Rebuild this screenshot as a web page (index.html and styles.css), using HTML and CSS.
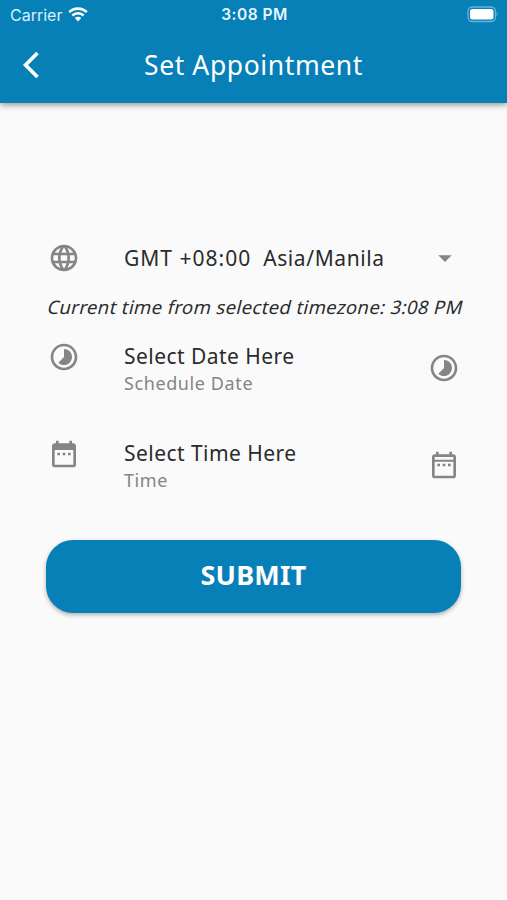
FILE: index.html
```html
<!DOCTYPE html>
<html lang="en">
<head>
<meta charset="utf-8">
<title>Set Appointment</title>
<link rel="stylesheet" href="styles.css">
</head>
<body>
<header class="appbar">
  <div class="status">
    <div class="carrier"><span>Carrier</span>
      <svg class="wifi" viewBox="0 0 20 15"><path d="M1.2 5.2a12.5 12.5 0 0 1 17.6 0M4.4 8.5a8 8 0 0 1 11.2 0" fill="none" stroke="currentColor" stroke-width="2.6"/><path d="M6.8 11.1a4.6 4.6 0 0 1 6.4 0L10 14.4z" fill="currentColor"/></svg>
    </div>
    <span class="clock">3:08 PM</span>
    <svg class="battery" viewBox="0 0 32 17"><rect x="1" y="1" width="27.5" height="14.5" rx="4.5" fill="none" stroke="#6bb4d9" stroke-width="1.3"/><rect x="3" y="3" width="23.5" height="10.5" rx="2.5" fill="#fff"/><path d="M29.7 5.8q2 2.4 0 4.8z" fill="#6bb4d9"/></svg>
  </div>
  <div class="titlebar">
    <svg class="back" viewBox="0 0 18 28"><path d="M15.5 2L3.5 14l12 12" fill="none" stroke="#fff" stroke-width="3.6"/></svg>
    <h1>Set Appointment</h1>
  </div>
</header>
<main>
  <div class="row zone">
    <svg class="icon" viewBox="0 0 24 24"><path d="M11.99 2C6.47 2 2 6.48 2 12s4.47 10 9.99 10C17.52 22 22 17.52 22 12S17.52 2 11.99 2zm6.93 6h-2.95c-.32-1.25-.78-2.45-1.38-3.56 1.84.63 3.37 1.91 4.33 3.56zM12 4.04c.83 1.2 1.48 2.53 1.91 3.96h-3.82c.43-1.43 1.08-2.76 1.91-3.96zM4.26 14C4.1 13.36 4 12.69 4 12s.1-1.36.26-2h3.38c-.08.66-.14 1.32-.14 2 0 .68.06 1.34.14 2H4.26zm.82 2h2.95c.32 1.25.78 2.45 1.38 3.56-1.84-.63-3.37-1.9-4.33-3.56zm2.95-8H5.08c.96-1.66 2.49-2.93 4.33-3.56C8.81 5.55 8.35 6.75 8.03 8zM12 19.96c-.83-1.2-1.48-2.53-1.91-3.96h3.82c-.43 1.43-1.08 2.76-1.91 3.96zM14.34 14H9.66c-.09-.66-.16-1.32-.16-2 0-.68.07-1.35.16-2h4.68c.09.65.16 1.32.16 2 0 .68-.07 1.34-.16 2zm.25 5.56c.6-1.11 1.06-2.31 1.38-3.56h2.95c-.96 1.65-2.49 2.93-4.33 3.56zM16.36 14c.08-.66.14-1.32.14-2 0-.68-.06-1.34-.14-2h3.38c.16.64.26 1.31.26 2s-.1 1.36-.26 2h-3.38z"/></svg>
    <div class="value"><span class="offset">GMT +08:00</span><span class="city">Asia/Manila</span></div>
    <svg class="icon" viewBox="0 0 24 24"><path d="M7 10l5 5 5-5z"/></svg>
  </div>
  <p class="current">Current time from selected timezone: 3:08 PM</p>
  <div class="row">
    <svg class="icon" viewBox="0 0 24 24"><path d="M16.24 7.76C15.07 6.59 13.54 6 12 6v6l-4.24 4.24c2.34 2.34 6.14 2.34 8.49 0 2.34-2.34 2.34-6.14-.01-8.48zM12 2C6.48 2 2 6.48 2 12s4.48 10 10 10 10-4.48 10-10S17.52 2 12 2zm0 18c-4.42 0-8-3.58-8-8s3.58-8 8-8 8 3.58 8 8-3.58 8-8 8z"/></svg>
    <div class="field"><div class="label">Select Date Here</div><div class="hint">Schedule Date</div></div>
    <svg class="icon trail" viewBox="0 0 24 24"><path d="M16.24 7.76C15.07 6.59 13.54 6 12 6v6l-4.24 4.24c2.34 2.34 6.14 2.34 8.49 0 2.34-2.34 2.34-6.14-.01-8.48zM12 2C6.48 2 2 6.48 2 12s4.48 10 10 10 10-4.48 10-10S17.52 2 12 2zm0 18c-4.42 0-8-3.58-8-8s3.58-8 8-8 8 3.58 8 8-3.58 8-8 8z"/></svg>
  </div>
  <div class="row">
    <svg class="icon" viewBox="0 0 24 24"><path d="M9 11H7v2h2v-2zm4 0h-2v2h2v-2zm4 0h-2v2h2v-2zm2-7h-1V2h-2v2H8V2H6v2H5c-1.11 0-1.99.9-1.99 2L3 20c0 1.1.89 2 2 2h14c1.1 0 2-.9 2-2V6c0-1.1-.9-2-2-2zm0 16H5V9h14v11z"/></svg>
    <div class="field"><div class="label">Select Time Here</div><div class="hint">Time</div></div>
    <svg class="icon trail" viewBox="0 0 24 24"><path d="M9 11H7v2h2v-2zm4 0h-2v2h2v-2zm4 0h-2v2h2v-2zm2-7h-1V2h-2v2H8V2H6v2H5c-1.11 0-1.99.9-1.99 2L3 20c0 1.1.89 2 2 2h14c1.1 0 2-.9 2-2V6c0-1.1-.9-2-2-2zm0 16H5V9.6h14V20zm0-12H5V6h14v2z"/></svg>
  </div>
  <button class="submit">SUBMIT</button>
</main>
</body>
</html>
```
FILE: styles.css
```css
* { box-sizing: border-box; }
body {
  margin: 0;
  height: 900px;
  background: #fafafa;
  color: #2b2b2b;
  font-family: "Noto Sans", sans-serif;
}
svg { display: block; }
.appbar {
  height: 103px;
  background: #0780b8;
  color: #fff;
  box-shadow: 0 2px 6px rgba(0, 0, 0, .4);
}
.status {
  display: grid;
  grid-template-columns: 1fr auto 1fr;
  align-items: center;
  height: 30px;
  padding: 0 8px 0 10px;
  font: 16px/30px Inter, sans-serif;
}
.carrier { display: flex; align-items: center; gap: 6px; margin-top: -1px; color: #d9f0fb; }
.wifi { width: 20px; height: 15px; color: #fff; }
.clock { font-weight: 600; font-size: 15.5px; color: #e6f6ff; letter-spacing: .5px; }
.battery { width: 32px; height: 17px; justify-self: end; margin-top: -1px; }
.titlebar {
  display: grid;
  grid-template-columns: 18px 1fr 18px;
  align-items: center;
  height: 70px;
  padding: 0 22px;
}
.back { width: 18px; height: 28px; }
h1 { margin: 0; text-align: center; font-size: 26.5px; font-weight: 400; line-height: 69px; letter-spacing: .6px; }
main { padding: 137px 46px 0 47px; }
.row {
  display: grid;
  grid-template-columns: 32px 1fr 32px;
  column-gap: 44px;
  height: 97px;
  margin-right: 1px;
  padding-left: 1px;
}
.icon { width: 32px; height: 32px; fill: #858585; }
.zone { height: 36px; align-items: center; }
.value { display: flex; gap: 12px; font-size: 21px; line-height: 36px; white-space: nowrap; }
.offset { letter-spacing: 1px; }
.city { letter-spacing: .6px; }
.current {
  width: max-content;
  height: 34px;
  margin: 14px 0 17px 1px;
  font-size: 18.5px;
  line-height: 34px;
  letter-spacing: .37px;
  white-space: nowrap;
  transform: skewX(-14deg);
}
.field { white-space: nowrap; }
.label { font-size: 21px; line-height: 30px; letter-spacing: .45px; }
.hint { font-size: 18px; line-height: 24px; letter-spacing: .6px; color: #858585; }
.trail { margin-top: 11px; }
.submit {
  display: block;
  width: 415px;
  height: 73px;
  margin: 5px 0 0 -1px;
  padding: 0 0 3px;
  border: 0;
  border-radius: 27px;
  background: #0780b8;
  box-shadow: 0 2px 4px rgba(0, 0, 0, .3);
  color: #fff;
  font: 700 27px/70px "Noto Sans", sans-serif;
  letter-spacing: .2px;
}
```
